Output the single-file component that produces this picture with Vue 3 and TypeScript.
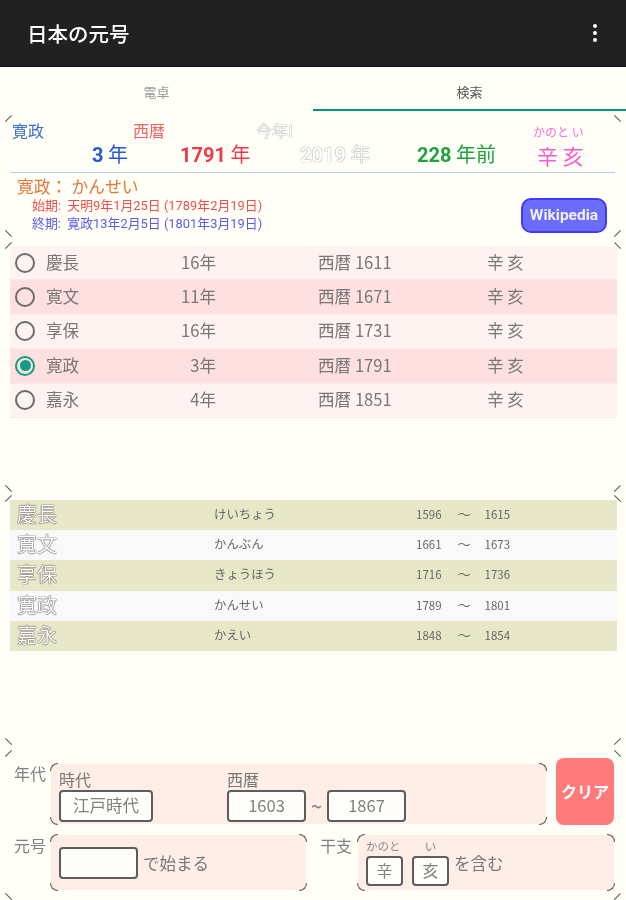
<script setup lang="ts">
interface EraRow { era: string; years: string; seireki: string; on: boolean }
interface YomiRow { era: string; yomi: string; from: string; to: string }
const eras: EraRow[] = [
  { era: '慶長', years: '16年', seireki: '西暦 1611', on: false },
  { era: '寛文', years: '11年', seireki: '西暦 1671', on: false },
  { era: '享保', years: '16年', seireki: '西暦 1731', on: false },
  { era: '寛政', years: '3年', seireki: '西暦 1791', on: true },
  { era: '嘉永', years: '4年', seireki: '西暦 1851', on: false },
]
const yomi: YomiRow[] = [
  { era: '慶長', yomi: 'けいちょう', from: '1596', to: '1615' },
  { era: '寛文', yomi: 'かんぶん', from: '1661', to: '1673' },
  { era: '享保', yomi: 'きょうほう', from: '1716', to: '1736' },
  { era: '寛政', yomi: 'かんせい', from: '1789', to: '1801' },
  { era: '嘉永', yomi: 'かえい', from: '1848', to: '1854' },
]
const corners = ['tl', 'tr', 'bl', 'br']
</script>

<template>
  <div class="page">
    <header class="bar">
      <span class="title">日本の元号</span>
      <span class="kebab"><i></i><i></i><i></i></span>
    </header>
    <nav class="tabs">
      <div class="tab">電卓</div>
      <div class="tab active">検索</div>
    </nav>

    <section class="panel p1">
      <span v-for="c in corners" :key="c" class="tick" :class="c"></span>
      <div class="heads">
        <span class="h-era">寛政</span>
        <span class="h-west">西暦</span>
        <span class="h-now ghost">今年!</span>
        <span class="h-kana">かのと い</span>
      </div>
      <div class="values">
        <span class="v v-blue"><b>3</b> 年</span>
        <span class="v v-red"><b>1791</b> 年</span>
        <span class="v ghost v-now"><b>2019</b> 年</span>
        <span class="v v-green"><b>228</b> 年前</span>
        <span class="v v-pink">辛 亥</span>
      </div>
      <div class="info">
        <div class="info-text">
          <div class="reading">寛政： かんせい</div>
          <div class="term t-start">始期:&nbsp; 天明9年1月25日 (1789年2月19日)</div>
          <div class="term t-end">終期:&nbsp; 寛政13年2月5日 (1801年3月19日)</div>
        </div>
        <div class="wiki">Wikipedia</div>
      </div>
    </section>

    <section class="panel p2">
      <span v-for="c in corners" :key="c" class="tick" :class="c"></span>
      <div v-for="(r, i) in eras" :key="r.era" class="era-row" :class="{ pink: i % 2 === 1 }">
        <span class="radio" :class="{ on: r.on }"></span>
        <span class="e-name">{{ r.era }}</span>
        <span class="e-years">{{ r.years }}</span>
        <span class="e-west">{{ r.seireki }}</span>
        <span class="e-eto">辛 亥</span>
      </div>
    </section>

    <section class="panel p3">
      <span v-for="c in corners" :key="c" class="tick" :class="c"></span>
      <div v-for="(r, i) in yomi" :key="r.era" class="yomi-row" :class="{ olive: i % 2 === 0 }">
        <span class="y-name">{{ r.era }}</span>
        <span class="y-yomi">{{ r.yomi }}</span>
        <span class="y-range">{{ r.from }}<span class="y-wave">〜</span>{{ r.to }}</span>
      </div>
    </section>

    <section class="panel p4">
      <span v-for="c in corners" :key="c" class="tick" :class="c"></span>
      <div class="form-top">
        <span class="f-label">年代</span>
        <div class="box box-age">
          <span v-for="c in corners" :key="c" class="arc" :class="c"></span>
          <div class="fld f-jidai">
            <span class="fld-label">時代</span>
            <span class="input w94">江戸時代</span>
          </div>
          <div class="fld">
            <span class="fld-label">西暦</span>
            <div class="range">
              <span class="input w79">1603</span>
              <span class="tilde">~</span>
              <span class="input w79">1867</span>
            </div>
          </div>
        </div>
        <div class="clear">クリア</div>
      </div>
      <div class="form-bottom">
        <span class="f-label">元号</span>
        <div class="box box-era">
          <span v-for="c in corners" :key="c" class="arc" :class="c"></span>
          <span class="input w79"></span>
          <span class="suffix">で始まる</span>
        </div>
        <span class="f-label f-eto">干支</span>
        <div class="box box-eto">
          <span v-for="c in corners" :key="c" class="arc" :class="c"></span>
          <div class="eto-col">
            <span class="eto-kana">かのと</span>
            <span class="input w37">辛</span>
          </div>
          <div class="eto-col">
            <span class="eto-kana center">い</span>
            <span class="input w37">亥</span>
          </div>
          <span class="suffix eto-suffix">を含む</span>
        </div>
      </div>
    </section>
  </div>
</template>

<style>
html, body { margin: 0; background: #fffef7; }
</style>

<style scoped>
.page {
  width: 626px;
  height: 900px;
  overflow: hidden;
  display: flex;
  flex-direction: column;
  background: #fffef7;
  font-family: "Noto Sans CJK JP", Roboto, sans-serif;
  color: #777;
  filter: blur(0.5px);
}
.bar {
  height: 66px;
  flex: none;
  background: #212121;
  border-bottom: 1px solid #111;
  display: flex;
  align-items: center;
  justify-content: space-between;
  padding: 0 29px 0 27px;
  color: #fff;
}
.title { font-size: 20.5px; font-weight: 500; }
.kebab { display: flex; flex-direction: column; gap: 3px; }
.kebab i { width: 4px; height: 4px; border-radius: 50%; background: #fff; }
.tabs { display: flex; height: 44px; flex: none; }
.tab {
  width: 313px;
  text-align: center;
  font-size: 13px;
  line-height: 50px;
  color: #999;
  box-sizing: border-box;
}
.tab.active { color: #555; border-bottom: 2px solid #00917a; }

.panel { position: relative; margin: 0 4px; flex: none; }
.tick {
  position: absolute;
  width: 9px;
  height: 1.2px;
  background: #555;
}
.tick.tl { left: 0; top: 3px; transform: rotate(-45deg); }
.tick.tr { right: 0; top: 3px; transform: rotate(45deg); }
.tick.bl { left: 0; bottom: 3px; transform: rotate(45deg); }
.tick.br { right: 0; bottom: 3px; transform: rotate(-45deg); }

.p1 { margin-top: 4px; height: 122px; padding-left: 8px; box-sizing: border-box; }
.heads { display: flex; height: 25px; align-items: flex-end; font-size: 16px; line-height: 20px; }
.h-era { width: 121px; color: #3b6fd0; }
.h-west { width: 123px; color: #f26464; }
.h-now { width: 277px; }
.h-kana { color: #ff70d0; font-size: 12px; line-height: 17px; }
.ghost { color: #fff; text-shadow: 0 0 1px #444; }
.values {
  display: flex;
  height: 33px;
  box-sizing: border-box;
  width: 605px;
  margin-left: -2px;
  padding: 0 0 3px 82px;
  align-items: center;
  border-bottom: 1.5px solid #b9cbe6;
  font-size: 20px;
  line-height: 24px;
}
.v b { font-family: Roboto, sans-serif; font-weight: 700; font-size: 20px; }
.v-blue { width: 88px; color: #2358d8; }
.v-red { width: 120px; color: #ee3a4a; }
.v-now { width: 117px; }
.v-green { width: 120px; color: #1fa23f; }
.v-pink { color: #ff58d0; font-size: 21px; }
.info { display: flex; padding-left: 5px; }
.info-text { width: 504px; }
.reading {
  font-family: Roboto, "Noto Sans CJK JP", sans-serif;
  font-size: 16.8px;
  line-height: 20px;
  margin-top: 4px;
  color: #e8783a;
  white-space: nowrap;
}
.term {
  font-family: Roboto, "Noto Sans CJK JP", sans-serif;
  font-size: 12.9px;
  line-height: 18px;
  padding-left: 15px;
  white-space: nowrap;
}
.t-start { color: #f04f50; }
.t-end { color: #5c5cec; }
.wiki {
  margin-top: 25px;
  width: 86px;
  height: 35px;
  box-sizing: border-box;
  background: #6c6cfa;
  border: 2px solid #3c3cf2;
  border-radius: 10px;
  color: #f0f0ff;
  font-family: Roboto, sans-serif;
  font-weight: 700;
  font-size: 15.5px;
  line-height: 31px;
  text-align: center;
}

.p2 { margin-top: 5px; height: 250px; padding: 4px 5px 0 6px; box-sizing: border-box; }
.era-row {
  height: 34.4px;
  box-sizing: border-box;
  display: flex;
  align-items: center;
  background: #fff3f1;
  border-bottom: 1px solid #f3eceb;
  font-size: 16.6px;
  line-height: 22px;
  padding-bottom: 2px;
  white-space: nowrap;
}
.era-row.pink { background: #ffe0e0; }
.radio {
  width: 20px;
  height: 20px;
  box-sizing: border-box;
  margin: 2px 0 0 5px;
  border: 2px solid #6b6b6b;
  border-radius: 50%;
  flex: none;
  display: flex;
  align-items: center;
  justify-content: center;
}
.radio.on { border-color: #0f9d83; }
.radio.on::after {
  content: "";
  width: 11px;
  height: 11px;
  border-radius: 50%;
  background: #0f9d83;
}
.e-name { width: 40px; margin-left: 11px; }
.e-years { width: 130px; text-align: right; flex: none; }
.e-west { margin-left: 102px; width: 169px; }

.p3 { margin-top: 3px; height: 250px; padding: 5px 5px 0 6px; box-sizing: border-box; }
.yomi-row {
  height: 30.2px;
  display: flex;
  align-items: center;
  background: #f9f9f9;
  white-space: nowrap;
  line-height: 20px;
  padding-bottom: 2px;
  box-sizing: border-box;
}
.yomi-row.olive { background: #e8e8c9; }
.y-name { width: 197px; margin-left: 7px; font-size: 20px; color: #fff; text-shadow: 0 0 1px #222, 0 0 1px #222; }
.y-yomi { width: 202px; font-size: 12.4px; color: #666; }
.y-range { font-size: 11.5px; color: #666; display: flex; align-items: center; }
.y-wave { width: 29px; margin: 0 6px 0 8px; text-align: center; font-size: 13px; }

.p4 { margin-top: 5px; height: 150px; padding-left: 10px; box-sizing: border-box; }
.f-label { font-size: 16px; line-height: 22px; width: 37px; flex: none; color: #808080; }
.form-top { display: flex; align-items: flex-start; padding-top: 8px; height: 85px; box-sizing: border-box; }
.form-top .f-label { margin-top: 4px; }
.box { position: relative; background: #ffeee8; box-sizing: border-box; }
.box-age {
  width: 495px;
  height: 60px;
  margin-top: 6px;
  padding: 5px 8px 0;
  display: flex;
}
.fld { display: flex; flex-direction: column; align-items: flex-start; }
.f-jidai { width: 168px; }
.fld-label { font-size: 16px; line-height: 20px; color: #777; margin-bottom: 1px; }
.range { display: flex; align-items: center; }
.tilde { width: 21px; text-align: center; font-size: 20px; line-height: 20px; }
.input {
  box-sizing: border-box;
  height: 32px;
  background: #fffefb;
  border: 2px solid #5d5d5d;
  border-radius: 4px;
  display: inline-flex;
  align-items: center;
  justify-content: center;
  font-size: 16.5px;
  line-height: 22px;
  padding-bottom: 2px;
  color: #808080;
  flex: none;
}
.w94 { width: 94px; }
.w79 { width: 79px; }
.w37 { width: 37px; height: 30px; font-size: 16px; }
.clear {
  margin-left: 10px;
  width: 58px;
  height: 67px;
  background: #ff7b7b;
  border-radius: 8px;
  color: #fff;
  font-weight: 700;
  font-size: 16px;
  line-height: 67px;
  text-align: center;
}
.form-bottom { display: flex; align-items: flex-start; }
.form-bottom .f-label { margin-top: -1px; }
.f-eto { margin-left: 14px; width: 38px; }
.box-era {
  width: 255px;
  height: 55px;
  display: flex;
  align-items: center;
  padding-left: 8px;
}
.suffix { margin-left: 5px; font-size: 16.5px; }
.box-eto {
  width: 256px;
  height: 55px;
  display: flex;
  padding: 2px 0 0 8px;
}
.eto-col { display: flex; flex-direction: column; margin-right: 9px; }
.eto-kana { font-size: 11.5px; line-height: 19px; color: #888; }
.eto-kana.center { text-align: center; }
.eto-suffix { margin: 13px 0 0 -4px; line-height: 26px; }
.arc {
  position: absolute;
  width: 8px;
  height: 8px;
  box-sizing: border-box;
  border: 0 solid #555;
}
.arc.tl { left: -1px; top: -1px; border-top-width: 1.5px; border-left-width: 1.5px; border-top-left-radius: 8px; }
.arc.tr { right: -1px; top: -1px; border-top-width: 1.5px; border-right-width: 1.5px; border-top-right-radius: 8px; }
.arc.bl { left: -1px; bottom: -1px; border-bottom-width: 1.5px; border-left-width: 1.5px; border-bottom-left-radius: 8px; }
.arc.br { right: -1px; bottom: -1px; border-bottom-width: 1.5px; border-right-width: 1.5px; border-bottom-right-radius: 8px; }
</style>
